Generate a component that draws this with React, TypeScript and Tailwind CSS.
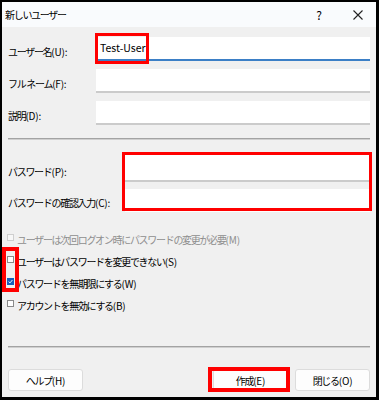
import type { ReactNode } from 'react'

const font = { fontFamily: '"Noto Sans CJK JP", "Noto Sans", sans-serif' }

// Japanese part is squeezed a bit, the "(X):" part keeps its normal spacing
function Jp({ text }: { text: string }) {
  const cut = text.indexOf('(')
  const head = cut >= 0 ? text.slice(0, cut) : text
  const tail = cut >= 0 ? text.slice(cut) : ''
  return (
    <span className="whitespace-nowrap text-[10px]">
      <span className="tracking-[-1.3px]">{head}</span>
      <span className="tracking-[-0.2px]">{tail}</span>
    </span>
  )
}

function TextInput({ value, className = '' }: { value?: string; className?: string }) {
  return (
    <div className={`flex items-center bg-white pl-[4px] text-[10.5px] text-black ${className}`}>
      {value}
    </div>
  )
}

function CheckRow({ label, checked, disabled }: { label: string; checked?: boolean; disabled?: boolean }) {
  return (
    <div className="flex h-[22px] items-center">
      <span
        className={`ml-[-1px] flex h-[7px] w-[7px] items-center justify-center border ${
          checked ? 'border-[#1560bd] bg-[#1560bd]' : disabled ? 'border-[#cfcfcf] bg-[#f7f7f7]' : 'border-[#8a8a8a] bg-white'
        }`}
      >
        {checked && (
          <svg width="5" height="5" viewBox="0 0 5 5">
            <path d="M0.6 2.6 L2 3.9 L4.4 1" stroke="white" strokeWidth="0.9" fill="none" />
          </svg>
        )}
      </span>
      <span className={`ml-[3px] ${disabled ? 'text-[#8e8e8e]' : 'text-black'}`}>
        <Jp text={label} />
      </span>
    </div>
  )
}

function Button({ children }: { children: string }) {
  return (
    <div className="flex h-[22px] w-[75px] items-center justify-center rounded-[3px] border border-[#dcdcdc] bg-[#fdfdfd] text-black">
      <Jp text={children} />
    </div>
  )
}

function Separator() {
  return (
    <div>
      <div className="h-px bg-[#a3a3a3]" />
      <div className="h-px bg-[#cfcfcf]" />
    </div>
  )
}

function Row({ label, labelWidth, children }: { label: string; labelWidth: string; children: ReactNode }) {
  return (
    <div className="flex items-center">
      <span className={labelWidth}>
        <Jp text={label} />
      </span>
      {children}
    </div>
  )
}

export default function App() {
  return (
    <div style={font} className="relative flex h-[400px] w-[379px] flex-col border-b-[3px] border-l-2 border-r-[3px] border-t-2 border-black bg-[#f0f0f0] text-black">
      <div className="flex h-[25px] items-center bg-[#f9fbfd] pl-[3px]">
        <Jp text="新しいユーザー" />
        <span className="ml-auto text-[12px]">?</span>
        <svg className="ml-[31px] mr-[13px]" width="10" height="10" viewBox="0 0 10 10">
          <path d="M0.5 0.5 L9.5 9.5 M9.5 0.5 L0.5 9.5" stroke="#222" strokeWidth="1.1" />
        </svg>
      </div>

      <div className="flex flex-1 flex-col px-[6px]">
        <div className="mt-[10px] flex flex-col gap-[8px]">
          <Row label="ユーザー名(U):" labelWidth="w-[88px]">
            <TextInput value="Test-User" className="h-[24px] flex-1 border-b-2 border-[#3b7fc6]" />
          </Row>
          <Row label="フル ネーム(F):" labelWidth="w-[88px]">
            <TextInput className="h-[24px] flex-1 border-b-2 border-[#cbcbcb]" />
          </Row>
          <Row label="説明(D):" labelWidth="w-[88px]">
            <TextInput className="h-[24px] flex-1 border-b-2 border-[#cbcbcb]" />
          </Row>
        </div>

        <div className="mt-[13px]">
          <Separator />
        </div>

        <div className="mt-[15px] flex flex-col gap-[6px]">
          <Row label="パスワード(P):" labelWidth="w-[117px]">
            <TextInput className="h-[27px] flex-1 border-b-2 border-[#cbcbcb]" />
          </Row>
          <Row label="パスワードの確認入力(C):" labelWidth="w-[117px]">
            <TextInput className="h-[23px] flex-1" />
          </Row>
        </div>

        <div className="mt-[14px] flex flex-col">
          <CheckRow label="ユーザーは次回ログオン時にパスワードの変更が必要(M)" disabled />
          <CheckRow label="ユーザーはパスワードを変更できない(S)" />
          <CheckRow label="パスワードを無期限にする(W)" checked />
          <CheckRow label="アカウントを無効にする(B)" />
        </div>

        <div className="mt-[32px]">
          <Separator />
        </div>

        <div className="mt-[21px] flex items-center">
          <Button>ヘルプ(H)</Button>
          <div className="flex-1" />
          <Button>作成(E)</Button>
          <div className="w-[7px]" />
          <Button>閉じる(O)</Button>
        </div>
      </div>

      {/* red annotation boxes */}
      <div className="pointer-events-none absolute left-[93px] top-[31px] h-[31px] w-[54px] border-[3px] border-[#ff0000]" />
      <div className="pointer-events-none absolute left-[120px] top-[150px] h-[59px] w-[250px] border-[3px] border-[#ff0000]" />
      <div className="pointer-events-none absolute left-0 top-[245px] h-[45px] w-[17px] border-[4px] border-[#ff0000]" />
      <div className="pointer-events-none absolute left-[206px] top-[365px] h-[25px] w-[82px] border-[4px] border-[#ff0000]" />
    </div>
  )
}
